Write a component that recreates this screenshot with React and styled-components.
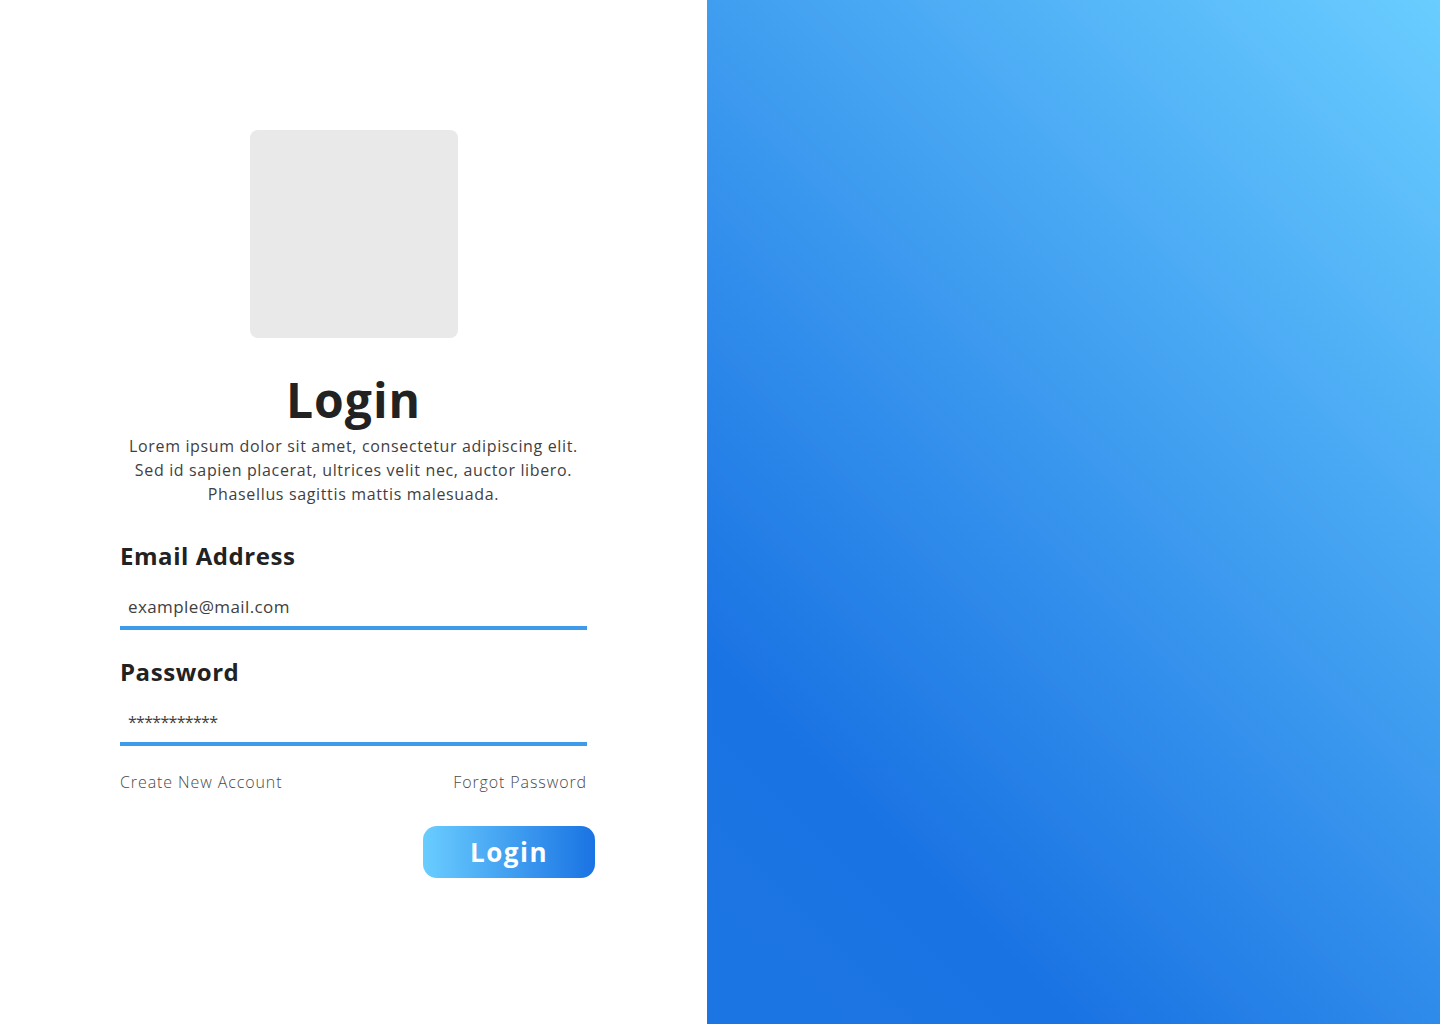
import React from "react";
import styled, { createGlobalStyle } from "styled-components";

const GlobalStyle = createGlobalStyle`
  html, body {
    margin: 0;
    padding: 0;
    background: #ffffff;
  }
  body {
    font-family: "Open Sans", "Noto Sans", sans-serif;
  }
  * { box-sizing: border-box; }
`;

const Page = styled.div`
  display: flex;
  width: 1440px;
  height: 1024px;
  overflow: hidden;
`;

const LeftPanel = styled.section`
  width: 707px;
  flex: none;
  display: flex;
  flex-direction: column;
  align-items: center;
  padding-top: 130px;
`;

const GradientPanel = styled.aside`
  flex: 1;
  background: linear-gradient(45deg, #1c76e2 0%, #1a73e3 21%, #6acdff 100%);
`;

const LogoBox = styled.div`
  width: 208px;
  height: 208px;
  border-radius: 8px;
  background: #e9e9e9;
`;

const Title = styled.h1`
  margin: 30px 0 0;
  font-family: "Open Sans", sans-serif;
  font-weight: 700;
  font-size: 48px;
  line-height: 64px;
  letter-spacing: 1px;
  color: #222222;
`;

const Intro = styled.p`
  margin: 2px 0 0;
  width: 500px;
  text-align: center;
  font-size: 16px;
  line-height: 24px;
  letter-spacing: 0.65px;
  color: #3f3f3f;
`;

const Form = styled.form`
  width: 467px;
  margin-top: 32px;
  display: flex;
  flex-direction: column;
`;

const Label = styled.label`
  display: block;
  font-weight: 700;
  font-size: 24px;
  line-height: 36px;
  letter-spacing: 0.55px;
  color: #222222;
`;

const Field = styled.input`
  display: block;
  width: 100%;
  height: 40px;
  margin: 16px 0 24px;
  padding: 0 8px 4px;
  border: none;
  border-bottom: 4px solid #3d9be9;
  outline: none;
  background: transparent;
  font-family: "Open Sans", sans-serif;
  font-size: ${(p) => p.$size || 17}px;
  letter-spacing: ${(p) => p.$spacing ?? 0.4}px;
  color: #404040;
`;

const LinksRow = styled.div`
  display: flex;
  justify-content: space-between;
`;

const TextLink = styled.a`
  font-weight: 300;
  font-size: 16px;
  line-height: 24px;
  letter-spacing: 0.9px;
  color: #4a4a4a;
  text-decoration: none;
  cursor: pointer;
`;

const Actions = styled.div`
  display: flex;
  justify-content: flex-end;
  margin: 32px -8px 0 0;
`;

const LoginButton = styled.button`
  width: 172px;
  height: 52px;
  border: none;
  border-radius: 14px;
  background: linear-gradient(to right, #6acdff, #1a73e3);
  color: #ffffff;
  font-family: "Open Sans", sans-serif;
  font-weight: 700;
  font-size: 26px;
  letter-spacing: 1.5px;
  cursor: pointer;
`;

export default function App() {
  return (
    <>
      <GlobalStyle />
      <Page>
        <LeftPanel>
          <LogoBox />
          <Title>Login</Title>
          <Intro>
            Lorem ipsum dolor sit amet, consectetur adipiscing elit.
            <br />
            Sed id sapien placerat, ultrices velit nec, auctor libero.
            <br />
            Phasellus sagittis mattis malesuada.
          </Intro>
          <Form onSubmit={(e) => e.preventDefault()}>
            <Label htmlFor="email">Email Address</Label>
            <Field id="email" type="text" defaultValue="example@mail.com" />
            <Label htmlFor="password">Password</Label>
            <Field
              id="password"
              type="text"
              defaultValue="***********"
              $size={16}
              $spacing={-0.7}
            />
            <LinksRow>
              <TextLink>Create New Account</TextLink>
              <TextLink>Forgot Password</TextLink>
            </LinksRow>
            <Actions>
              <LoginButton type="submit">Login</LoginButton>
            </Actions>
          </Form>
        </LeftPanel>
        <GradientPanel />
      </Page>
    </>
  );
}
